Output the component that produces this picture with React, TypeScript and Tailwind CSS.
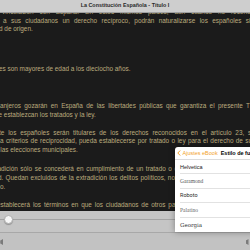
import type { ReactNode } from "react";

// líneas de texto del libro (se recortan por la izquierda y por la derecha)
const Line = ({ className, children }: { className: string; children: ReactNode }) => (
  <div className={`h-[8.6px] leading-[8.6px] ${className}`}>{children}</div>
);

const fonts = [
  { name: "Helvetica", cls: "font-['Liberation_Sans',sans-serif] text-[#1a1a1a]" },
  { name: "Garamond", cls: "font-['Liberation_Serif',serif] text-[#555]" },
  { name: "Roboto", cls: "font-['Roboto',sans-serif] text-[#2a2a2a]" },
  { name: "Palatino", cls: "font-['Liberation_Serif',serif] text-[#666]" },
  { name: "Georgia", cls: "font-['DejaVu_Serif',serif] text-[#333]" },
];

export default function App() {
  return (
    <div className="relative w-[250px] h-[250px] overflow-hidden bg-[#1b1b1b] flex flex-col font-['Liberation_Sans',Arial,sans-serif]">
      {/* BARRA SUPERIOR */}
      <div className="h-[13px] shrink-0 bg-[#cecece] border-b border-[#a0a0a0] flex items-center justify-center">
        <span className="text-[5.4px] font-bold text-[#2a2a2a] leading-none">
          La Constitución Española - Título I
        </span>
      </div>

      {/* TEXTO */}
      <div className="flex-1 overflow-hidden text-[6.4px] text-[#bcab7e]">
        <Line className="-mt-[5px] w-[262px] ml-[2px] text-justify [text-align-last:justify]">
          vinculación con España. En estos mismos países, aun cuando no reconozcan
        </Line>
        <Line className="w-[251px] ml-[3px] text-justify [text-align-last:justify]">
          a sus ciudadanos un derecho recíproco, podrán naturalizarse los españoles sin
        </Line>
        <Line className="-ml-[1px] whitespace-nowrap">d de origen.</Line>

        <Line className="mt-[31px] -ml-[1px] whitespace-nowrap">
          es son mayores de edad a los dieciocho años.
        </Line>

        <Line className="mt-[29px] w-[262px] text-justify [text-align-last:justify]">
          anjeros gozarán en España de las libertades públicas que garantiza el presente Título
        </Line>
        <Line className="-ml-[1.5px] whitespace-nowrap">e establezcan los tratados y la ley.</Line>

        <Line className="mt-[9px] w-[264px] -ml-[1px] text-justify [text-align-last:justify]">
          te los españoles serán titulares de los derechos reconocidos en el artículo 23, salvo
        </Line>
        <Line className="w-[268px] text-justify [text-align-last:justify]">
          a criterios de reciprocidad, pueda establecerse por tratado o ley para el derecho de sufragio
        </Line>
        <Line className="-ml-[5px] whitespace-nowrap">n las elecciones municipales.</Line>

        <Line className="mt-[11px] w-[272px] -ml-[2.5px] text-justify [text-align-last:justify]">
          adición sólo se concederá en cumplimiento de un tratado o de la ley, atendiendo al principio
        </Line>
        <Line className="w-[258px] -ml-[2px] text-justify [text-align-last:justify]">
          d. Quedan excluidos de la extradición los delitos políticos, no considerándose como tales
        </Line>
        <Line className="whitespace-nowrap">o.</Line>

        <Line className="mt-[9.5px] w-[278px] -ml-[3px] text-justify [text-align-last:justify]">
          establecerá los términos en que los ciudadanos de otros países y los apátridas podrán gozar
        </Line>
      </div>

      {/* DESLIZADOR */}
      <div className="relative h-[21px] shrink-0 bg-[#c5c5c5] pt-[8px]">
        <div className="h-px bg-[#a3a3a3]" />
        <div className="absolute left-[4px] top-[3.5px] w-[9px] h-[9px] rounded-full bg-[#f7f7f7] border border-[#b0b0b0] shadow-[0_1px_1px_rgba(0,0,0,0.25)]" />
      </div>
      <div className="h-px shrink-0 bg-[#a8a8a8]" />

      {/* BARRA INFERIOR */}
      <div className="h-[17px] shrink-0 bg-[#c2c2c2] flex items-center justify-between">
        <svg width="5" height="6" viewBox="0 0 5 6" className="-ml-[1px]">
          <rect x="0" y="1.5" width="1.5" height="3" fill="#7a7a7a" />
          <path d="M1.5 1.5 L4 0 L4 6 L1.5 4.5 Z" fill="#7a7a7a" />
        </svg>
        <svg width="7" height="6" viewBox="0 0 7 6">
          <rect x="3" y="1.5" width="1.5" height="3" fill="#7a7a7a" />
          <path d="M3 1.5 L5.5 0 L5.5 6 L3 4.5 Z" fill="#7a7a7a" />
        </svg>
      </div>

      {/* POPOVER ESTILO DE FUENTE */}
      <div className="absolute left-[175px] top-[147px] w-[120px] h-[85px] bg-white rounded-tl-[3px] shadow-[0_0_6px_rgba(0,0,0,0.35)] text-[5.5px]">
        <div className="h-[13px] flex items-center border-b border-[#dcdcdc]">
          <svg width="4" height="6" viewBox="0 0 4 6" className="ml-[2px]">
            <path d="M3.2 0.5 L0.8 3 L3.2 5.5" fill="none" stroke="#f2a22c" strokeWidth="1" />
          </svg>
          <span className="ml-[1.5px] text-[#f2a22c]">Ajustes eBook</span>
          <span className="ml-[3px] font-bold text-black">Estilo de fuente</span>
        </div>
        {fonts.map((f, i) => (
          <div key={f.name} className="h-[14.4px] flex items-center pl-[5px]">
            <div
              className={`h-full flex-1 flex items-center ${
                i < fonts.length - 1 ? "border-b border-[#e2e2e2]" : ""
              }`}
            >
              <span className={f.cls}>{f.name}</span>
            </div>
          </div>
        ))}
      </div>
    </div>
  );
}
